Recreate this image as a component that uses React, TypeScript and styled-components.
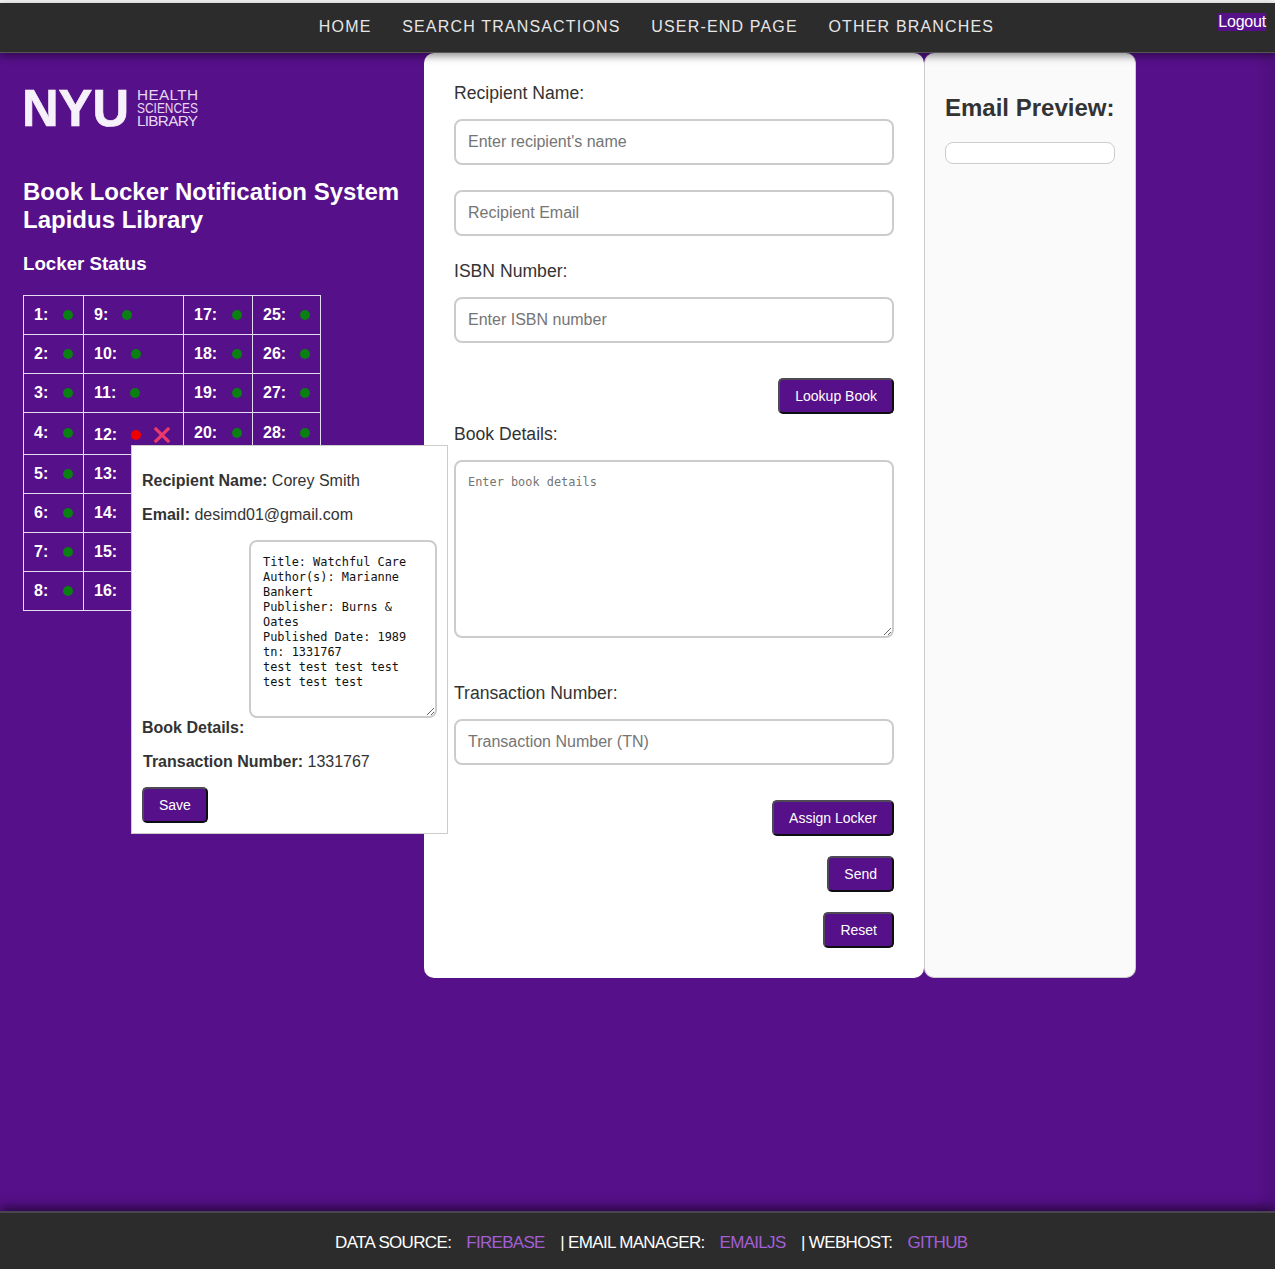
import React from "react";
import styled, { createGlobalStyle } from "styled-components";

const Global = createGlobalStyle`
  html, body { margin: 0; padding: 0; background: #f4f4f4; }
  * { box-sizing: border-box; }
  body { font-family: "Liberation Sans", Arial, sans-serif; color: #333; }
`;

const Page = styled.div`
  width: 1275px;
  height: 1269px;
  padding-top: 3px;
  display: flex;
  flex-direction: column;
`;

const Nav = styled.nav`
  position: relative;
  z-index: 3;
  height: 50px;
  flex: none;
  background: #2c2c2c;
  border-bottom: 1px solid #555;
  box-shadow: 0 3px 8px rgba(0, 0, 0, 0.45);
  display: flex;
  justify-content: center;
  align-items: center;
  padding: 0 0 2px 38px;
  gap: 30.7px;
`;

const NavLink = styled.a`
  color: #e6e6e6;
  font-size: 16px;
  letter-spacing: 1.17px;
  text-transform: uppercase;
`;

const Logout = styled.a`
  position: absolute;
  right: 9px;
  top: 10px;
  background: #561089;
  color: #fff;
  font-size: 16px;
  line-height: 18px;
  letter-spacing: -0.2px;
`;

const Main = styled.main`
  flex: 1;
  display: flex;
  align-items: flex-start;
  background: linear-gradient(to right, #561089 98.5%, #4e0f7d 100%);
`;

const Side = styled.section`
  width: 424px;
  flex: none;
  padding: 35px 0 0 23px;
  color: #fff;
`;

const Logo = styled.svg`
  display: block;
  width: 176px;
  height: 40px;
  overflow: visible;
  margin-bottom: -2px;
`;

const LogoMark = styled.text`
  font-family: "Liberation Sans", Arial, sans-serif;
  font-size: 51px;
  font-weight: 700;
  fill: #f6f0fb;
  stroke: #f6f0fb;
  stroke-width: 0.7px;
`;

const LogoWord = styled.text`
  font-family: "Liberation Sans", Arial, sans-serif;
  font-size: 15.3px;
  fill: #e6d8f2;
`;

const Title = styled.h1`
  margin: 52px 0 0;
  font-size: 24px;
  line-height: 28px;
  font-weight: 700;
`;

const Subtitle = styled.h2`
  margin: 18px 0 0;
  font-size: 18.72px;
  line-height: 24px;
  font-weight: 700;
`;

const TableWrap = styled.div`
  position: relative;
  margin-top: 19px;
`;

const Table = styled.table`
  border-collapse: collapse;
  table-layout: fixed;
  width: 298px;
`;

const Col = styled.col<{ $w: number }>`
  width: ${(p) => p.$w}px;
`;

const Row = styled.tr<{ $h: number }>`
  height: ${(p) => p.$h}px;
`;

const Cell = styled.td`
  border: 1px solid #e6dcef;
  padding: 0 0 0 10px;
  font-size: 16px;
  font-weight: 700;
  white-space: nowrap;
`;

const CellInner = styled.div<{ $pt: number; $pb: number }>`
  display: flex;
  align-items: center;
  padding-top: ${(p) => p.$pt}px;
  padding-bottom: ${(p) => p.$pb}px;
`;

const Dot = styled.span<{ $busy?: boolean; $gap: number }>`
  display: inline-block;
  width: 10px;
  height: 10px;
  margin-left: ${(p) => p.$gap}px;
  border-radius: 50%;
  background: ${(p) => (p.$busy ? "#f00000" : "#0a7f12")};
`;

const Clear = styled.svg`
  margin-left: 12px;
  width: 18px;
  height: 18px;
  flex: none;
`;

const Popup = styled.div`
  position: absolute;
  z-index: 2;
  left: 108px;
  top: 150px;
  width: 317px;
  height: 389px;
  background: #fff;
  border: 1px solid #ccc;
  padding: 25px 10px 0;
  color: #333;
  font-size: 16px;
`;

const PopupLine = styled.p<{ $top?: number; $left?: number }>`
  margin: ${(p) => p.$top ?? 0}px 0 0 ${(p) => p.$left ?? 0}px;
  line-height: 20px;
`;

const PopupArea = styled.div`
  display: flex;
  flex-direction: column;
  margin-top: 15px;
`;

const PopupLabel = styled.strong`
  line-height: 20px;
`;

const PopupText = styled.textarea`
  display: block;
  align-self: flex-end;
  width: 188px;
  height: 178px;
  padding: 13px 12px;
  border: 2px solid #ccc;
  border-radius: 8px;
  font-family: "DejaVu Sans Mono", "Liberation Mono", monospace;
  font-size: 11.9px;
  line-height: 15px;
  color: #111;
  outline: none;
  background: #fff;
  overflow: hidden;
`;

const Button = styled.button<{ $top?: number }>`
  display: block;
  height: 36px;
  margin-top: ${(p) => p.$top ?? 0}px;
  padding: 0 15px;
  background: #561089;
  color: #fff;
  font-family: inherit;
  font-size: 14px;
  border-radius: 5px;
  border-width: 2px;
  border-style: solid;
  border-color: #4d4a55 #0d0d12 #0d0d12 #4d4a55;
`;

const FormPanel = styled.section`
  width: 500px;
  flex: none;
  height: 925px;
  background: #fff;
  border-radius: 10px;
  padding: 30px;
  display: flex;
  flex-direction: column;
  align-items: stretch;
`;

const Label = styled.label<{ $top?: number }>`
  display: block;
  margin-top: ${(p) => p.$top ?? 0}px;
  font-size: 17.6px;
  line-height: 20px;
  color: #333;
`;

const Input = styled.input<{ $top?: number }>`
  display: block;
  width: 100%;
  height: 46px;
  flex: none;
  margin-top: ${(p) => p.$top ?? 0}px;
  padding: 0 12px;
  border: 2px solid #ccc;
  border-radius: 8px;
  font-family: inherit;
  font-size: 16px;
  color: #333;
  outline: none;
  &::placeholder { color: #757575; }
`;

const Details = styled.textarea`
  display: block;
  width: 100%;
  height: 178px;
  flex: none;
  margin-top: 16px;
  padding: 13px 12px;
  border: 2px solid #ccc;
  border-radius: 8px;
  font-family: "DejaVu Sans Mono", "Liberation Mono", monospace;
  font-size: 11.9px;
  line-height: 15px;
  outline: none;
  &::placeholder { color: #757575; }
`;

const ButtonRow = styled.div`
  display: flex;
  justify-content: flex-end;
`;

const PreviewPanel = styled.aside`
  width: 212px;
  flex: none;
  height: 925px;
  background: #fafafa;
  border: 1px solid #ccc;
  border-width: 0 1px 1px 1px;
  border-radius: 10px;
  padding: 41px 20px 0;
`;

const PreviewTitle = styled.h2`
  margin: 0;
  font-size: 24px;
  line-height: 28px;
  font-weight: 700;
  color: #333;
  white-space: nowrap;
`;

const PreviewBox = styled.div`
  margin-top: 20px;
  width: 170px;
  height: 22px;
  background: #fff;
  border: 1px solid #ccc;
  border-radius: 8px;
`;

const Footer = styled.footer`
  position: relative;
  z-index: 3;
  height: 58px;
  flex: none;
  background: #2c2c2c;
  border-top: 2px solid #4a4450;
  box-shadow: 0 -4px 10px rgba(0, 0, 0, 0.55);
  display: flex;
  align-items: center;
  justify-content: center;
  padding: 4px 0 0 43px;
  color: #fff;
  font-size: 17px;
  letter-spacing: -0.66px;
  white-space: nowrap;
`;

const FooterLink = styled.a`
  color: #a45fd6;
  margin: 0 15.5px 0 15px;
  letter-spacing: -0.7px;
`;

const rows = [0, 1, 2, 3, 4, 5, 6, 7];
const heights = [39, 39, 39, 42, 39, 39, 39, 39];

export default function App() {
  return (
    <Page>
      <Global />
      <Nav>
        <NavLink>Home</NavLink>
        <NavLink>Search Transactions</NavLink>
        <NavLink>User-End Page</NavLink>
        <NavLink>Other Branches</NavLink>
        <Logout>Logout</Logout>
      </Nav>
      <Main>
        <Side>
          <Logo viewBox="0 0 176 40">
            <LogoMark x="-1" y="38" textLength="107" lengthAdjust="spacingAndGlyphs">
              NYU
            </LogoMark>
            <LogoWord x="114" y="11.5" textLength="61">
              HEALTH
            </LogoWord>
            <LogoWord x="114" y="24.5" textLength="61" lengthAdjust="spacingAndGlyphs">
              SCIENCES
            </LogoWord>
            <LogoWord x="114" y="37.5" textLength="61">
              LIBRARY
            </LogoWord>
          </Logo>
          <Title>
            Book Locker Notification System
            <br />
            Lapidus Library
          </Title>
          <Subtitle>Locker Status</Subtitle>
          <TableWrap>
            <Table>
              <colgroup>
                <Col $w={60} />
                <Col $w={100} />
                <Col $w={69} />
                <Col $w={68} />
              </colgroup>
              <tbody>
                {rows.map((r) => (
                  <Row key={r} $h={heights[r]}>
                    {[0, 1, 2, 3].map((c) => {
                      const n = c * 8 + r + 1;
                      const busy = n === 12;
                      const covered = r > 3 && c > 1;
                      return (
                        <Cell key={c}>
                          {!covered && (
                            <CellInner $pt={busy ? 3 : 0} $pb={r === 3 && !busy ? 1 : 0}>
                              {n}:
                              <Dot $busy={busy} $gap={c === 0 || c === 2 ? 15 : 14} />
                              {busy && (
                                <Clear viewBox="0 0 18 18">
                                  <path
                                    d="M1.8 1.8 L16.2 16.2 M16.2 1.8 L1.8 16.2"
                                    stroke="#ea3a6c"
                                    strokeWidth="3.2"
                                    fill="none"
                                  />
                                </Clear>
                              )}
                            </CellInner>
                          )}
                        </Cell>
                      );
                    })}
                  </Row>
                ))}
              </tbody>
            </Table>
            <Popup>
              <PopupLine>
                <strong>Recipient Name:</strong> Corey Smith
              </PopupLine>
              <PopupLine $top={14}>
                <strong>Email:</strong> desimd01@gmail.com
              </PopupLine>
              <PopupArea>
                <PopupText
                  readOnly
                  value={
                    "Title: Watchful Care\nAuthor(s): Marianne Bankert\nPublisher: Burns & Oates\nPublished Date: 1989\ntn: 1331767\ntest test test test test test test"
                  }
                />
                <PopupLabel>Book Details:</PopupLabel>
              </PopupArea>
              <PopupLine $top={14} $left={1}>
                <strong>Transaction Number:</strong> 1331767
              </PopupLine>
              <Button $top={15}>Save</Button>
            </Popup>
          </TableWrap>
        </Side>
        <FormPanel>
          <Label>Recipient Name:</Label>
          <Input $top={16} placeholder="Enter recipient's name" />
          <Input $top={25} placeholder="Recipient Email" />
          <Label $top={25}>ISBN Number:</Label>
          <Input $top={16} placeholder="Enter ISBN number" />
          <ButtonRow>
            <Button $top={35}>Lookup Book</Button>
          </ButtonRow>
          <Label $top={10}>Book Details:</Label>
          <Details placeholder="Enter book details" />
          <Label $top={45}>Transaction Number:</Label>
          <Input $top={16} placeholder="Transaction Number (TN)" />
          <ButtonRow>
            <Button $top={35}>Assign Locker</Button>
          </ButtonRow>
          <ButtonRow>
            <Button $top={20}>Send</Button>
          </ButtonRow>
          <ButtonRow>
            <Button $top={20}>Reset</Button>
          </ButtonRow>
        </FormPanel>
        <PreviewPanel>
          <PreviewTitle>Email Preview:</PreviewTitle>
          <PreviewBox />
        </PreviewPanel>
      </Main>
      <Footer>
        DATA SOURCE:
        <FooterLink>FIREBASE</FooterLink>| EMAIL MANAGER:
        <FooterLink>EMAILJS</FooterLink>| WEBHOST:
        <FooterLink>GITHUB</FooterLink>
      </Footer>
    </Page>
  );
}
